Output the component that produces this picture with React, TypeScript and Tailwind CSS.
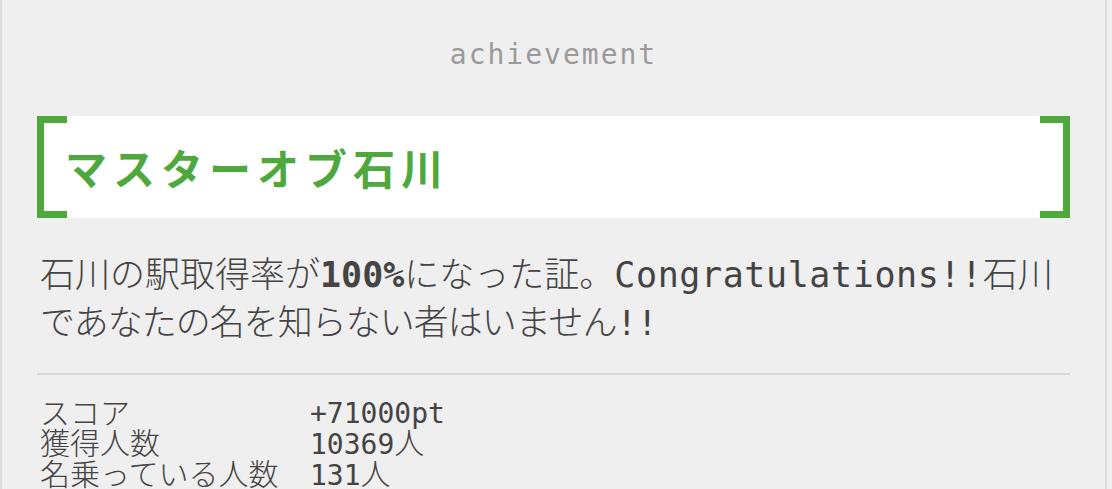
import React from "react";

const FONT = "font-['DejaVu_Sans_Mono','Noto_Sans_CJK_JP',monospace]";

export default function App() {
  return (
    <div className={`w-[1112px] h-[489px] overflow-hidden bg-[#efefef] ${FONT}`}>
      <div className="w-[1107px] h-[489px] border-l-2 border-r-2 border-[#dcdcdc] px-[35px]">
        <div className="pt-[38px] h-[116px] text-center text-[28px] leading-[34px] tracking-[2px] text-[#9a9a9a]">
          achievement
        </div>
        <div className="relative h-[102px] bg-white border-l-[7px] border-r-[7px] border-[#4fa83d] flex items-center pl-[21px]">
          <div className="absolute left-0 top-0 w-[23px] h-[7px] bg-[#4fa83d]" />
          <div className="absolute left-0 bottom-0 w-[23px] h-[7px] bg-[#4fa83d]" />
          <div className="absolute right-0 top-0 w-[23px] h-[7px] bg-[#4fa83d]" />
          <div className="absolute right-0 bottom-0 w-[23px] h-[7px] bg-[#4fa83d]" />
          <span className="text-[42px] font-bold tracking-[6px] text-[#4fa83d] font-['Noto_Sans_CJK_JP',sans-serif] leading-none">
            マスターオブ石川
          </span>
        </div>
        <p className="pt-[33px] text-[35px] leading-[48px] font-light text-[#444444] pl-[3px] whitespace-nowrap">
          石川の駅取得率が<b className="font-bold">100%</b>になった証。<span className="tracking-[0.6px]">Congratulations!!</span>石川
          <br />
          <span className="tracking-[-1px]">であなたの名を知らない者はいません</span>
          <span className="text-[34px]">!!</span>
        </p>
        <div className="mt-[26px] h-[2px] bg-[#d6d6d6]" />
        <div className="pt-[24px] grid grid-cols-[270px_1fr] text-[30px] leading-[30px] font-light text-[#444444] pl-[3px]">
          <span>スコア</span>
          <span className="text-[28px]">+71000pt</span>
          <span>獲得人数</span>
          <span>
            <span className="text-[28px]">10369</span>人
          </span>
          <span>名乗っている人数</span>
          <span>
            <span className="text-[28px]">131</span>人
          </span>
        </div>
      </div>
    </div>
  );
}
